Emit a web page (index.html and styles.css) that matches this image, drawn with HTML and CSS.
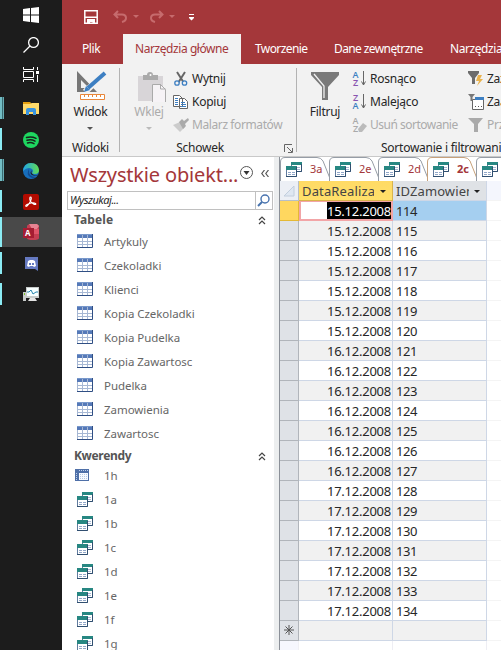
FILE: index.html
```html
<!DOCTYPE html>
<html lang="pl">
<head>
<meta charset="utf-8">
<title>Access</title>
<link rel="stylesheet" href="styles.css">
</head>
<body>
<svg class="defs" width="0" height="0">
  <symbol id="table" viewBox="0 0 16 14"><path fill="#fff" d="M0 0h16v14H0z"/><path fill="#5579b8" d="M0 0h16v4H0z"/><path fill="none" stroke="#a7b8d4" d="M.5 4v9M5.5 0v13M10.500 0v13M0 7.500h15M0 10.500h15"/><path fill="none" stroke="#304f84" d="M0 13.500h15.500V0"/><path stroke="#7898cb" d="M0 .5h15"/></symbol>
  <symbol id="query" viewBox="0 0 16 15"><path fill="#fff" stroke="#607b9e" d="M5.500.5h10v9h-10z"/><path fill="#278782" d="M5 0h11v3H5z"/><path stroke="#a6b9d4" d="M7 5.500h7M7 7.500h7"/><path fill="#fff" stroke="#607b9e" d="M.5 5.500h10v9H.5z"/><path fill="#278782" d="M0 4h11v4H0z"/><path stroke="#91a7c8" stroke-dasharray="3 1" d="M2 10.500h7M2 12.500h7"/><path fill="none" stroke="#304f70" d="M0 14.500h10.500V5M11 9.500h4.500V2"/></symbol>
  <symbol id="cross" viewBox="0 0 14 12"><path fill="#4f70a8" d="M0 0h14v12H0z"/><path fill="#f7faff" d="M4 4h9v7H4z"/><path stroke="#bfd0ec" stroke-dasharray="1 1" d="M4 1.500h9M1.500 4v7"/><path stroke="#b6c8e2" stroke-dasharray="1 1" d="M5 5.500h7M5 7.500h7M5 9.500h7"/></symbol>
  <symbol id="funnel" viewBox="0 0 28 28"><path fill="#7a7a7a" d="M0 0h28v3L17 15v13h-6V15L0 3z"/><path fill="none" stroke="#f2f2f2" stroke-width="1.300" d="M3 2l10 12v12"/></symbol>
  <symbol id="arrow" viewBox="0 0 7 4"><path d="M0 0h6L3 3z"/></symbol>
</svg>
<div class="screen">
  <aside class="taskbar">
    <div class="task sys"><svg width="16" height="16"><path fill="#fff" d="M0 2l7-1v6.500H0zM8 .9L16 0v7.500H8zM0 8.500h7V15l-7-1zM8 8.500h8V16l-8-1z"/></svg></div>
    <div class="task sys"><svg width="16" height="16" fill="none" stroke="#fff" stroke-width="1.300"><circle cx="10.500" cy="5.500" r="4.900"/><path d="M7 9L.5 15.500"/></svg></div>
    <div class="task sys"><svg width="16" height="16" fill="none" stroke="#fff"><path d="M.5 0v2.500h10V0M.5 4.500h10v6H.5zM.5 15v-2.500h10V15M14.500 0v3M14.500 8v7"/><path fill="#fff" stroke="none" d="M13 4h3v3h-3z"/></svg></div>
    <div class="task app many"><svg width="16" height="15"><path fill="#e5a011" d="M0 1h7l2 2h7v3H0z"/><path fill="#ffda6b" d="M0 3h7l2-1h7v11H0z"/><path fill="#3a94df" d="M3 14V9q0-2 2-2h6q2 0 2 2v5h-3v-3H6v3z"/></svg></div>
    <div class="task app"><svg width="16" height="16"><circle cx="8" cy="8" r="8" fill="#1ed760"/><path fill="none" stroke="#17231b" stroke-width="1.500" stroke-linecap="round" d="M3.500 5.500q5-1.500 9.500.8M4 8.300q4.300-1.200 8 .8M4.500 10.900q3.500-.9 6.500.7"/></svg></div>
    <div class="task app many"><svg width="16" height="16"><defs><linearGradient id="e"><stop stop-color="#20a6e6"/><stop offset="1" stop-color="#62dc50"/></linearGradient></defs><circle cx="8" cy="8" r="8" fill="#176ebc"/><path fill="url(#e)" d="M0 8Q1 0 8 0q7 0 8 7 0 4-4 4-3 0-3-1 2-2 0-4Q5 3 0 8"/><path fill="#1d1d1d" d="M9 7q-2 3 2 5 3 1 4-1l-1 1.500q-3 .5-5-.5-3-2 0-5"/><path fill="#124b91" d="M6 6q-3 5 1 8 3 2 6 0-8 0-7-8"/></svg></div>
    <div class="task app"><svg width="16" height="16"><rect width="16" height="16" rx="2" fill="#b30b00"/><path fill="none" stroke="#fff" stroke-width="1.100" d="M7.500 3c2 0 0 6-3.500 9-1.500 1-2-.5 0-1.500 3-1.500 7-2 8.500-1 1 1-.5 1.500-2 .5C8 8.500 6.500 6 6.800 4q.1-1 .7-1"/></svg></div>
    <div class="task app active"><svg width="16" height="16"><path fill="#c43e52" d="M4 2q0-2 6-2t6 2v12q0 2-6 2t-6-2z"/><path fill="#e68392" d="M6 0h8l2 2-2 3H9z"/><path fill="#e05469" d="M11 5h5v5h-5z"/><path fill="#a51d32" d="M0 4h11v10H0z"/></svg><b>A</b></div>
    <div class="task app"><svg width="13" height="14"><path fill="#6579c0" d="M0 0h13v14l-3-2H0z"/><path fill="#fff" d="M3 4l2-1h3l2 1 1 5-2 1-1-1H5l-1 1-2-1z"/><path fill="#6579c0" d="M4 6h2v2H4zM7 6h2v2H7z"/></svg></div>
    <div class="task app"><svg width="16" height="15"><path fill="#c7cbca" d="M0 5h3v9H0zM3 0h13v11H3z"/><path fill="#f7ffff" d="M4 1h11v8H4z"/><path fill="none" stroke="#2684ad" d="M4 5h2l2-2 2 4 3-2h2"/><path fill="#e4e4e4" d="M7 11h5l2 3H5z"/><path fill="#79bd29" d="M1 6h1v2H1z"/></svg></div>
  </aside>
  <main class="window">
    <header class="title">
      <div class="quick">
        <svg width="14" height="14"><path fill="none" stroke="#fff" stroke-width="1.500" d="M.8.800h12.400v12.400H.8z"/><path fill="#fff" d="M1 6.500h12V8H1zM3 9h8v5H8.500v-2H6v2H3z"/></svg>
        <svg class="undo" width="25" height="13"><path fill="none" stroke="#c66b6d" stroke-width="2" d="M5 1L1.500 4.500 5 8M2 4.500h7q4 0 4 3.500 0 3-4 4"/><path fill="#c66b6d" d="M20 5h6l-3 3z"/></svg>
        <svg class="redo" width="26" height="13"><path fill="none" stroke="#c66b6d" stroke-width="2" d="M10 1l3.500 3.500L10 8M13 4.500H6q-4 0-4 3.500 0 3 4 4"/><path fill="#c66b6d" d="M20 5h6l-3 3z"/></svg>
        <svg class="custom" width="5" height="7"><path fill="#fff" d="M0 0h5v1H0zM0 3h5v1L2.500 6.500 0 4z"/></svg>
      </div>
      <nav class="menu"><span class="file">Plik</span><span class="current">Narzędzia główne</span><span class="create">Tworzenie</span><span class="external">Dane zewnętrzne</span><span class="tools">Narzędzia bazy</span></nav>
    </header>
    <section class="ribbon">
      <div class="group views">
        <div class="big"><svg width="32" height="32"><path fill="#777" fill-rule="evenodd" d="M2 1l20 21H2zm4 9v8h8z"/><path stroke="#f2f2f2" stroke-width="6" d="M10 22L29 4"/><path stroke="#3d7fc2" stroke-width="4" d="M13 18L30 3"/><path fill="#3d7fc2" d="M9 22l2-6 4 4z"/><path fill="#fff" stroke="#e8873b" d="M5.500 24.500h24v5h-24z"/><path stroke="#e8873b" d="M9.500 25v2m4-2v2m4-2v2m4-2v2m4-2v2"/></svg><span>Widok</span><svg class="down" width="7" height="4"><use href="#arrow"/></svg></div>
        <div class="label">Widoki</div>
      </div>
      <div class="group clipboard">
        <div class="tools-row">
          <div class="big disabled"><svg width="28" height="32"><path fill="#d8d5d8" d="M0 4h25v25H0z"/><path fill="#aaa" d="M5 3h4q0-3 3-3t3 3h5v5H5z"/><circle cx="12.500" cy="3" r="1" fill="#fff"/><path fill="#f6f3f6" stroke="#aaa" d="M14.500 12.500h8l5 5v13h-13z"/><path fill="none" stroke="#aaa" d="M22.500 12v5h5"/></svg><span>Wklej</span><svg class="down" width="7" height="4"><use href="#arrow"/></svg></div>
          <div class="small-list">
            <div><svg width="16" height="16"><path stroke="#666" stroke-width="2" d="M4 1l7 11M12 1L5 12"/><g fill="#f2f2f2" stroke="#3d7fc2" stroke-width="1.300"><circle cx="4" cy="12" r="2.200"/><circle cx="11.500" cy="12" r="2.200"/></g></svg><span>Wytnij</span></div>
            <div><svg width="16" height="16"><g fill="#fff" stroke="#666"><path d="M.5 1.500h6l3 3v8h-9zM6.500 4.500h5l3 3v7h-8z"/></g><path stroke="#3d7fc2" d="M2 4.500h3m-3 2h3m-3 2h3m-3 2h3m3-2h4m-4 2h5m-5 2h5"/></svg><span>Kopiuj</span></div>
            <div class="disabled"><svg width="16" height="16"><path fill="#ccc" d="M0 8l7-3 5 5-5 5z"/><path fill="#aaa" d="M6 5l3-3 2 2 4-3 1 2-4 4 1 2-3 3z"/></svg><span class="painter">Malarz formatów</span></div>
          </div>
        </div>
        <div class="label">Schowek</div>
        <svg class="launcher" width="9" height="9" fill="none" stroke="#666"><path d="M.5 8V.5H8M3 3l5 5M8.500 4v4.500H4"/></svg>
      </div>
      <div class="group sort">
        <div class="tools-row">
          <div class="big filter"><svg width="28" height="28"><use href="#funnel"/></svg><span>Filtruj</span></div>
          <div class="small-list ordering">
            <div><i class="az"><b>A</b><em>Z</em></i><svg class="long" width="6" height="15" fill="none" stroke="#666"><path d="M2.500 0v14M.5 10.500l2 3.500 2-3.500"/></svg><span>Rosnąco</span></div>
            <div><i class="az"><em>Z</em><b>A</b></i><svg class="long" width="6" height="15" fill="none" stroke="#666"><path d="M2.500 0v14M.5 10.500l2 3.500 2-3.500"/></svg><span>Malejąco</span></div>
            <div class="disabled"><i class="az"><b>A</b><em>Z</em></i><svg class="eraser" width="9" height="14"><path fill="#bbb" d="M0 10l5-6 4 3-5 6H1z"/></svg><span class="clear">Usuń sortowanie</span></div>
          </div>
          <div class="small-list filters">
            <div><svg width="16" height="16"><path fill="#6c6c6c" d="M0 0h11v2L7 7v6H4V7L0 2z"/><path fill="#e9b24d" d="M10 4h4l-2 4h3l-6 7 2-5H8z"/></svg><span>Zaznaczenie</span></div>
            <div><svg width="16" height="16"><path fill="#fff" stroke="#666" d="M4.500 5.500h11v10h-11z"/><path fill="#3d7fc2" d="M7 3h9v3H7z"/><path fill="#777" d="M0 0h7L4.500 3v4h-2V3z"/><path stroke="#555" stroke-dasharray="1 2" d="M7 12.500h7"/></svg><span>Zaawansowane</span></div>
            <div class="disabled"><svg width="16" height="16"><path fill="#aaa" d="M0 1h15l-5 6v8H6V7z"/></svg><span>Przełącz filtr</span></div>
          </div>
        </div>
        <div class="label">Sortowanie i filtrowanie</div>
      </div>
    </section>
    <div class="workspace">
      <aside class="objects">
        <div class="heading"><h1>Wszystkie obiekt...</h1><svg class="menu-circle" width="14" height="14"><circle cx="6.500" cy="6.500" r="6" fill="none" stroke="#555"/><path fill="#333" d="M3.500 5h6l-3 4z"/></svg><svg class="collapse" width="8" height="7" fill="none" stroke="#555" stroke-width="1.200"><path d="M3.500 0L.8 3.500 3.500 7M7.500 0L4.800 3.500 7.500 7"/></svg></div>
        <div class="search"><span>Wyszukaj...</span><div><svg width="14" height="14" fill="none" stroke="#4772ae"><circle cx="8" cy="5" r="4" stroke-width="1.400"/><path stroke-width="2" d="M5 8l-4 4"/></svg></div></div>
        <div class="section"><b>Tabele</b><svg width="8" height="8" fill="none" stroke="#444" stroke-width="1.200"><path d="M1 4l3-3 3 3M1 8l3-3 3 3"/></svg></div>
        <div id="tables"></div>
        <div class="section queries"><b>Kwerendy</b><svg width="8" height="8" fill="none" stroke="#444" stroke-width="1.200"><path d="M1 4l3-3 3 3M1 8l3-3 3 3"/></svg></div>
        <div id="queries"></div>
      </aside>
      <section class="document">
        <div class="doc-tabs" id="tabs"></div>
        <div class="sheet" id="sheet">
          <div class="corner"><svg width="18" height="19"><path fill="#dfe7f2" stroke="#c2cedd" d="M14 5v10H4z"/></svg></div>
          <div class="column selected"><span>DataRealizacji</span><svg width="7" height="4"><use href="#arrow"/></svg></div>
          <div class="column"><span>IDZamowienia</span><svg width="7" height="4"><use href="#arrow"/></svg></div>
          <div class="rest headrest"></div>
        </div>
      </section>
    </div>
  </main>
</div>
<script src="app.js"></script>
</body>
</html>
```
FILE: styles.css
```css
* { box-sizing: border-box; }
body { margin: 0; font: 12px "Noto Sans", "Open Sans", sans-serif; color: #262626; }
svg { display: block; flex: none; }
.defs { position: absolute; }
.screen { width: 501px; height: 650px; display: flex; overflow: hidden; }

.taskbar { width: 62px; flex: none; background: #1c1c1c; }
.task { position: relative; height: 31px; display: flex; align-items: center; justify-content: center; }
.task.sys { height: 30px; }
.task.sys + .app { margin-top: 3px; }
.app::before { content: ""; position: absolute; left: 0; top: 4px; width: 2px; height: 22px; background: #8bebf3; }
.many::before { width: 4px; background: linear-gradient(90deg, #73bdc4 2px, #396b71 2px, #396b71 3px, #67abb2 3px); }
.task.active { background: linear-gradient(#494949, #494949) 0 0 / 100% 30px no-repeat; }
.active svg { margin-top: -2px; }
.app.active::before { top: 0; height: 30px; }
.task b { position: absolute; left: 25px; top: 12px; color: #fff; font: bold 8px/8px "Open Sans", sans-serif; }

.window { width: 439px; flex: none; overflow: hidden; }
.title { height: 64px; background: #a4373a; color: #fff; }
.quick { height: 34px; display: flex; align-items: flex-start; padding: 10px 0 0 22px; }
.undo { margin-left: 15px; }
.redo { margin-left: 11px; overflow: visible; }
.undo { overflow: visible; }
.custom { margin: 4px 0 0 14px; }
.menu { display: flex; height: 30px; line-height: 30px; white-space: nowrap; letter-spacing: -.43px; }
.menu span { flex: none; }
.file { width: 61px; padding-left: 20px; }
.current { width: 118px; padding-left: 12px; color: #a4373a; background: #f2f2f2; }
.create { width: 79px; padding-left: 14px; letter-spacing: -.7px; }
.create { letter-spacing: -.6px; }
.external { width: 116px; padding-left: 14px; letter-spacing: -.6px; }
.tools { padding-left: 14px; }

.ribbon { height: 93px; display: flex; background: #f2f2f2; border-bottom: 1px solid #c9c9c9; padding-top: 4px; }
.group { position: relative; height: 84px; border-right: 1px solid #b3b3b3; flex: none; letter-spacing: -.25px; }
.views { width: 58px; }
.clipboard { width: 177px; }
.sort { width: 285px; }
.tools-row { display: flex; }
.big { display: flex; flex-direction: column; align-items: center; height: 74px; padding-top: 2px; line-height: 20px; }
.big > svg:first-child { height: 32px; }
.big .down { margin-top: 5px; fill: #555; }
.clipboard .big { width: 48px; margin-left: 5px; padding-top: 4px; }
.clipboard .big > svg:first-child { margin-left: 5px; height: 30px; }
.disabled { color: #ababab; }
.disabled .down { fill: #bbb; }
.label { position: absolute; left: 0; right: 0; top: 71px; text-align: center; line-height: 18px; white-space: nowrap; }
.clipboard .label { padding-right: 16px; }
.sort .label { left: 84px; text-align: left; }
.launcher { position: absolute; right: 3px; top: 76px; }
.small-list { margin-top: -1px; }
.small-list > div { display: flex; align-items: center; height: 23px; white-space: nowrap; }
.small-list svg { margin-right: 3px; }
.painter { letter-spacing: -.4px; }
.big.filter { width: 55px; padding: 4px 0 0 1px; }
.big.filter > svg:first-child { height: 30px; padding-bottom: 2px; }
.ordering { width: 116px; }
.az { width: 7px; height: 15px; display: flex; flex-direction: column; align-items: center; font: 9px/7.500px "Open Sans", sans-serif; letter-spacing: 0; }
.az b { font-weight: 600; color: #3d7fc2; }
.az em { font-style: normal; font-weight: 600; color: #8955b0; }
.disabled .az b, .disabled .az em { color: #aaa; }
.small-list .long { margin: 0 3px 0 2px; }
.small-list .eraser { margin: 3px 3px 0 -1px; }
.clear { letter-spacing: -.5px; }

.workspace { display: flex; height: 493px; }
.objects { width: 218px; flex: none; height: 493px; background: #fff; border-right: 1px solid #8b9098; box-shadow: inset -5px 0 #eceeef; overflow: hidden; }
.heading { display: flex; height: 34px; padding: 0 0 0 8px; }
h1 { margin: 0; width: 169px; flex: none; white-space: nowrap; font: 20px/35px "Noto Sans", sans-serif; letter-spacing: -.17px; color: #a4373a; }
.menu-circle { margin: 9px 0 0 1px; }
.collapse { margin: 13px 0 0 7px; }
.search { width: 206px; height: 19px; margin-left: 5px; border: 1px solid #c0c0c0; display: flex; font-size: 11px; line-height: 16px; font-style: italic; letter-spacing: -.45px; }
.search span { flex: 1; padding-left: 2px; }
.search div { width: 17px; border-left: 1px solid #c0c0c0; padding: 2px 1px; }
.section { height: 20px; padding: 0 13px 0 12px; display: flex; align-items: center; justify-content: space-between; color: #555; line-height: 20px; letter-spacing: .1px; }
.section.queries { height: 18px; margin-top: 1px; letter-spacing: -.35px; }
.section svg { overflow: visible; }
.object { height: 24px; display: flex; align-items: center; color: #666; font-size: 11.500px; letter-spacing: -.05px; }
#queries { margin-top: -1px; }
.object span { margin-top: -2px; }
.object svg { margin: 0 11px 2px 15px; }
.object svg.small { margin: 0 15px 2px 13px; }

.document { width: 221px; flex: none; background: #fff; }
.doc-tabs { display: flex; height: 24px; padding-left: 1px; background: #fff; border-bottom: 1px solid #a9afb7; }
.doc-tab { position: relative; width: 49px; flex: none; height: 24px; display: flex; align-items: center; color: #a4373a; font-size: 11px; }
.doc-tab .shape { position: absolute; left: -1px; top: 0; }
.doc-tab .query { position: relative; margin: 0 8px 0 5px; }
.doc-tab span { position: relative; margin-top: -1px; }
.doc-tab.chosen span { font-weight: bold; }
.sheet { display: grid; grid-template-columns: 19px 94px 94px 14px; grid-template-rows: 20px; grid-auto-rows: 20px; font-size: 13px; line-height: 20px; }
.sheet > div { min-width: 0; overflow: hidden; border-right: 1px solid #ced7e6; border-bottom: 1px solid #ced7e6; }
.sheet .corner { background: #eceff5; border-color: #b7bec7; }
.column { display: flex; align-items: center; color: #444; background: #dfe2e6; padding-left: 3px; letter-spacing: .1px; }
.column span { width: 73px; flex: none; overflow: hidden; white-space: nowrap; line-height: 20px; }
.column svg { margin: 2px 0 0 5px; fill: #222; }
.sheet .selected { background: linear-gradient(#ffda65, #ffe06a); border-color: #d9b44c; }
.selected span { width: 72px; letter-spacing: .15px; }
.selected svg { margin-left: 6px; }
.sheet .selector { background: #dfe2e7; border-color: #b1b5bb; text-align: center; }
.selector svg { margin: 4px 4px; }
.sheet .date { text-align: right; letter-spacing: -.24px; padding-right: 1px; }
.sheet .id { padding-left: 3px; letter-spacing: -.4px; }
.sheet .alt { background: #f1f1f1; }
.sheet .rest { border-right: 0; border-color: #f4f4f4; }
.sheet .headrest { background: #f4f6fd; }
.sheet .mark { background: #ffd75f; border-color: #e4b936; }
.sheet .edit { border: 2px solid #f2a5a7; border-top-width: 1px; line-height: 18px; padding: 0; }
.edit span { display: inline-block; height: 17px; background: #000; color: #fff; }
.sheet .current-id { background: #a5cff0; }
.sheet .corner-end { background: #f6f7fe; border-color: #f0f0f5; }
.sheet .tail { border-color: #eeeef4; }
```
FILE: app.js
```javascript
const icon = (id, w, h, cls = "") =>
  `<svg class="${cls}" width="${w}" height="${h}"><use href="#${id}"/></svg>`;

const tables = ["Artykuly", "Czekoladki", "Klienci", "Kopia Czekoladki", "Kopia Pudelka",
  "Kopia Zawartosc", "Pudelka", "Zamowienia", "Zawartosc"];
document.getElementById("tables").innerHTML = tables
  .map(name => `<div class="object">${icon("table", 16, 14)}<span>${name}</span></div>`).join("");

const queries = ["1h", "1a", "1b", "1c", "1d", "1e", "1f", "1g"];
document.getElementById("queries").innerHTML = queries
  .map((name, i) => `<div class="object">${i ? icon("query", 16, 15) : icon("cross", 14, 12, "small")}<span>${name}</span></div>`).join("");

document.getElementById("tabs").innerHTML = ["3a", "2e", "2d", "2c", "1h"].map(name => {
  const chosen = name === "2c";
  return `<div class="doc-tab${chosen ? " chosen" : ""}">
    <svg class="shape" width="52" height="24"><path fill="#fff" stroke="${chosen ? "#c7a17b" : "#969da6"}" d="M.5 24V5Q.5.5 5 .5H37Q41 .5 43 4L51 24"/></svg>
    ${icon("query", 16, 15, "query")}<span>${name}</span></div>`;
}).join("");

let rows = "";
for (let id = 114; id <= 134; id++) {
  const first = id === 114;
  const day = id < 121 ? 15 : id < 128 ? 16 : 17;
  const alt = id % 2 ? " alt" : "";
  rows += `<div class="selector${first ? " mark" : ""}"></div>
    <div class="date${first ? " edit" : alt}"><span>${day}.12.2008</span></div>
    <div class="id${first ? " current-id" : alt}">${id}</div><div class="rest"></div>`;
}
rows += `<div class="selector"><svg width="10" height="10" stroke="#555"><path d="M5 0v10M0 5h10M1.500 1.500l7 7M8.500 1.500l-7 7"/></svg></div>
  <div class="alt"></div><div class="alt"></div><div class="rest"></div>
  <div class="corner-end"></div><div class="tail"></div><div class="tail"></div><div class="rest"></div>`;
document.getElementById("sheet").insertAdjacentHTML("beforeend", rows);
```
